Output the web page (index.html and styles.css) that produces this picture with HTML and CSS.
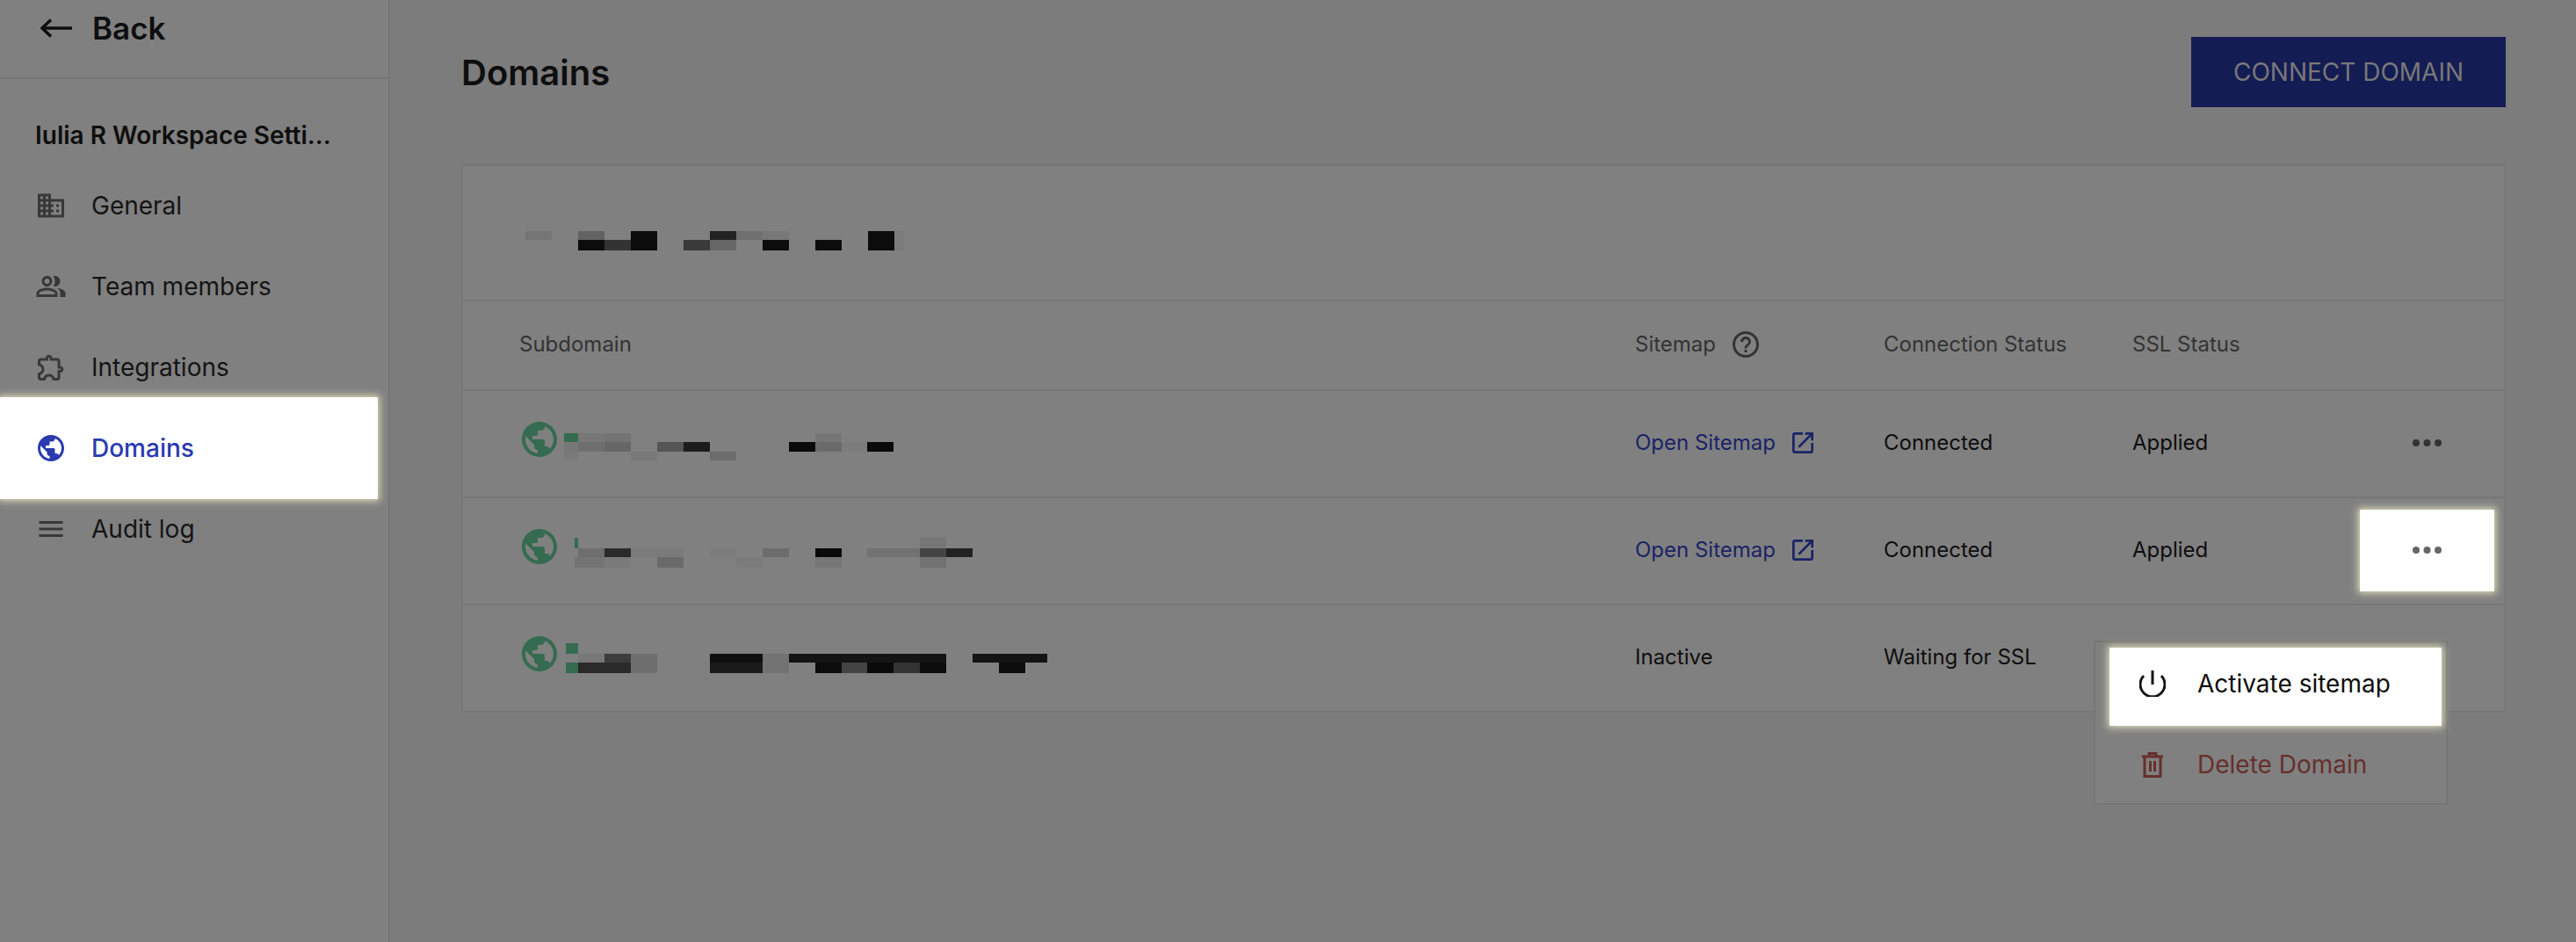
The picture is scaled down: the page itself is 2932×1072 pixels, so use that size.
FILE: index.html
```html
<!DOCTYPE html>
<html lang="en">
<head>
<meta charset="UTF-8" />
<title>Domains</title>
<link rel="stylesheet" href="styles.css">
</head>
<body>
<svg class="defs" width="0" height="0">
  <symbol id="globe" viewBox="2 2 20 20"><path d="M12 2C6.48 2 2 6.48 2 12s4.48 10 10 10 10-4.48 10-10S17.52 2 12 2zm-1 17.93c-3.95-.49-7-3.85-7-7.93 0-.62.08-1.21.21-1.79L9 15v1c0 1.1.9 2 2 2v1.93zm6.9-2.54c-.26-.81-1-1.39-1.9-1.39h-1v-3c0-.55-.45-1-1-1H8v-2h2c.55 0 1-.45 1-1V7h2c1.1 0 2-.9 2-2v-.41c2.93 1.19 5 4.06 5 7.41 0 2.08-.8 3.97-2.1 5.39z"/></symbol>
  <symbol id="open" viewBox="0 0 24 24"><path d="M19 19H5V5h7V3H5c-1.11 0-2 .9-2 2v14c0 1.1.89 2 2 2h14c1.1 0 2-.9 2-2v-7h-2v7zM14 3v2h3.59l-9.83 9.83 1.41 1.41L19 6.41V10h2V3h-7z"/></symbol>
  <symbol id="dots" viewBox="0 0 33 8"><circle cx="4" cy="4" r="4"/><circle cx="16.5" cy="4" r="4"/><circle cx="29" cy="4" r="4"/></symbol>
</svg>

<div class="page">
  <aside class="sidebar">
    <div class="back">
      <svg class="back-arrow" viewBox="0 0 36 22" width="36" height="22"><path d="M36 11H2M12 1.5 2 11l10 9.5"/></svg>
      <span>Back</span>
    </div>
    <div class="ws-title">Iulia R Workspace Setti...</div>
    <nav class="nav">
      <a class="nav-item">
        <svg class="icon" viewBox="0 0 24 24"><path d="M12 7V3H2v18h20V7H12zM6 19H4v-2h2v2zm0-4H4v-2h2v2zm0-4H4V9h2v2zm0-4H4V5h2v2zm4 12H8v-2h2v2zm0-4H8v-2h2v2zm0-4H8V9h2v2zm0-4H8V5h2v2zm10 12h-8v-2h2v-2h-2v-2h2v-2h-2V9h8v10zm-2-8h-2v2h2v-2zm0 4h-2v2h2v-2z"/></svg>
        General
      </a>
      <a class="nav-item">
        <svg class="icon" viewBox="0 0 24 24"><path d="M16.67 13.13C18.04 14.06 19 15.32 19 17v3h4v-3c0-2.18-3.57-3.47-6.33-3.87zM15 12c2.21 0 4-1.79 4-4s-1.79-4-4-4c-.47 0-.91.1-1.33.26C14.5 5.29 15 6.59 15 8s-.5 2.71-1.33 3.74c.42.16.86.26 1.33.26zM9 12c2.21 0 4-1.79 4-4s-1.79-4-4-4-4 1.79-4 4 1.79 4 4 4zm0-6c1.1 0 2 .9 2 2s-.9 2-2 2-2-.9-2-2 .9-2 2-2zM9 13c-2.67 0-8 1.34-8 4v3h16v-3c0-2.66-5.33-4-8-4zm6 5H3v-.99C3.2 16.29 6.3 15 9 15s5.8 1.29 6 2z"/></svg>
        Team members
      </a>
      <a class="nav-item">
        <svg class="icon" viewBox="0 0 24 24"><path d="M10.5 4.5c.28 0 .5.22.5.5v2h6v6h2c.28 0 .5.22.5.5s-.22.5-.5.5h-2v6h-2.12c-.68-1.75-2.39-3-4.38-3s-3.7 1.25-4.38 3H4v-2.12c1.75-.68 3-2.39 3-4.38 0-1.99-1.24-3.7-2.99-4.38L4 7h6V5c0-.28.22-.5.5-.5m0-2C9.12 2.5 8 3.62 8 5H4c-1.1 0-1.99.9-1.99 2v3.8h.29c1.49 0 2.7 1.21 2.7 2.7s-1.21 2.7-2.7 2.7H2V20c0 1.1.9 2 2 2h3.8v-.3c0-1.49 1.21-2.7 2.7-2.7s2.7 1.21 2.7 2.7v.3H17c1.1 0 2-.9 2-2v-4c1.38 0 2.5-1.12 2.5-2.5S20.38 11 19 11V7c0-1.1-.9-2-2-2h-4c0-1.38-1.12-2.5-2.5-2.5z"/></svg>
        Integrations
      </a>
      <a class="nav-item spot active">
        <svg class="icon" viewBox="0 0 24 24"><path d="M12 2C6.48 2 2 6.48 2 12s4.48 10 10 10 10-4.48 10-10S17.52 2 12 2zm-1 17.93c-3.95-.49-7-3.85-7-7.93 0-.62.08-1.21.21-1.79L9 15v1c0 1.1.9 2 2 2v1.93zm6.9-2.54c-.26-.81-1-1.39-1.9-1.39h-1v-3c0-.55-.45-1-1-1H8v-2h2c.55 0 1-.45 1-1V7h2c1.1 0 2-.9 2-2v-.41c2.93 1.19 5 4.06 5 7.41 0 2.08-.8 3.97-2.1 5.39z"/></svg>
        Domains
      </a>
      <a class="nav-item">
        <svg class="icon" viewBox="0 0 24 24"><path d="M3 18h18v-2H3v2zm0-5h18v-2H3v2zm0-7v2h18V6H3z"/></svg>
        Audit log
      </a>
    </nav>
  </aside>

  <main class="main">
    <div class="main-head">
      <h1 class="title">Domains</h1>
      <button class="connect">CONNECT DOMAIN</button>
    </div>

    <section class="card">
      <div class="card-top">
        <!-- blurred out domain name -->
        <svg class="mosaic" viewBox="594 189 600 152" width="600" height="152">
          <rect x="598" y="263" width="30" height="10" fill="#757575"/>
          <rect x="658" y="263" width="30" height="10" fill="#626262"/>
          <rect x="718" y="263" width="30" height="22" fill="#0c0c0c"/>
          <rect x="808" y="263" width="30" height="10" fill="#222"/>
          <rect x="838" y="263" width="30" height="10" fill="#707070"/>
          <rect x="868" y="263" width="30" height="10" fill="#787878"/>
          <rect x="988" y="263" width="30" height="22" fill="#0c0c0c"/>
          <rect x="658" y="273" width="30" height="12" fill="#0c0c0c"/>
          <rect x="688" y="273" width="30" height="12" fill="#333"/>
          <rect x="778" y="273" width="30" height="12" fill="#3a3a3a"/>
          <rect x="808" y="273" width="30" height="12" fill="#666"/>
          <rect x="868" y="273" width="30" height="12" fill="#0c0c0c"/>
          <rect x="928" y="273" width="30" height="12" fill="#0c0c0c"/>
          <rect x="1018" y="263" width="11" height="22" fill="#7b7b7b"/>
        </svg>
      </div>
      <table class="domains">
        <thead>
          <tr>
            <th class="col-sub">Subdomain</th>
            <th class="col-map"><span class="with-icon">Sitemap
              <svg class="help" viewBox="0 0 24 24"><path d="M11 18h2v-2h-2v2zm1-16C6.48 2 2 6.48 2 12s4.48 10 10 10 10-4.48 10-10S17.52 2 12 2zm0 18c-4.41 0-8-3.59-8-8s3.59-8 8-8 8 3.59 8 8-3.59 8-8 8zm0-14c-2.21 0-4 1.79-4 4h2c0-1.1.9-2 2-2s2 .9 2 2c0 2-3 1.75-3 5h2c0-2.25 3-2.5 3-5 0-2.21-1.79-4-4-4z"/></svg></span></th>
            <th class="col-conn">Connection Status</th>
            <th class="col-ssl">SSL Status</th>
            <th class="col-act"></th>
          </tr>
        </thead>
        <tbody>
          <tr>
            <td class="sub-cell">
              <svg class="mosaic" viewBox="594 445 600 120" width="600" height="120">
                <use href="#globe" x="594" y="480" width="40" height="40" class="globe"/>
                <rect x="642" y="493" width="16" height="10" fill="#356b50"/>
                <rect x="658" y="493" width="30" height="10" fill="#777"/>
                <rect x="688" y="493" width="30" height="10" fill="#747474"/>
                <rect x="928" y="493" width="30" height="10" fill="#767676"/>
                <rect x="642" y="503" width="16" height="11" fill="#787878"/>
                <rect x="658" y="503" width="30" height="11" fill="#6e6e6e"/>
                <rect x="688" y="503" width="30" height="11" fill="#666"/>
                <rect x="748" y="503" width="30" height="11" fill="#555"/>
                <rect x="778" y="503" width="30" height="11" fill="#1c1c1c"/>
                <rect x="898" y="503" width="30" height="11" fill="#0a0a0a"/>
                <rect x="928" y="503" width="30" height="11" fill="#6a6a6a"/>
                <rect x="958" y="503" width="29" height="11" fill="#7c7c7c"/>
                <rect x="987" y="503" width="30" height="11" fill="#0a0a0a"/>
                <rect x="642" y="514" width="16" height="10" fill="#7a7a7a"/>
                <rect x="718" y="514" width="30" height="10" fill="#787878"/>
                <rect x="808" y="514" width="30" height="10" fill="#6c6c6c"/>
              </svg>
            </td>
            <td><a class="link">Open Sitemap <svg class="open"><use href="#open"/></svg></a></td>
            <td>Connected</td>
            <td>Applied</td>
            <td class="act-cell"><button class="more"><svg class="dots"><use href="#dots"/></svg></button></td>
          </tr>
          <tr>
            <td class="sub-cell">
              <svg class="mosaic" viewBox="594 567 600 120" width="600" height="120">
                <use href="#globe" x="594" y="602" width="40" height="40" class="globe"/>
                <rect x="654" y="612" width="4" height="12" fill="#356b50"/>
                <rect x="1047" y="612" width="30" height="12" fill="#777"/>
                <rect x="658" y="624" width="30" height="10" fill="#6e6e6e"/>
                <rect x="688" y="624" width="30" height="10" fill="#2a2a2a"/>
                <rect x="718" y="624" width="60" height="10" fill="#7b7b7b"/>
                <rect x="808" y="624" width="30" height="10" fill="#7c7c7c"/>
                <rect x="868" y="624" width="30" height="10" fill="#6c6c6c"/>
                <rect x="928" y="624" width="30" height="10" fill="#0a0a0a"/>
                <rect x="987" y="624" width="60" height="10" fill="#727272"/>
                <rect x="1047" y="624" width="30" height="10" fill="#444"/>
                <rect x="1077" y="624" width="30" height="10" fill="#222"/>
                <rect x="654" y="634" width="34" height="12" fill="#747474"/>
                <rect x="688" y="634" width="30" height="12" fill="#7a7a7a"/>
                <rect x="748" y="634" width="30" height="12" fill="#6a6a6a"/>
                <rect x="838" y="634" width="30" height="12" fill="#7b7b7b"/>
                <rect x="928" y="634" width="30" height="12" fill="#767676"/>
                <rect x="1047" y="634" width="30" height="12" fill="#727272"/>
              </svg>
            </td>
            <td><a class="link">Open Sitemap <svg class="open"><use href="#open"/></svg></a></td>
            <td>Connected</td>
            <td>Applied</td>
            <td class="act-cell"><button class="more spot"><svg class="dots"><use href="#dots"/></svg></button></td>
          </tr>
          <tr>
            <td class="sub-cell">
              <svg class="mosaic" viewBox="594 689 600 120" width="600" height="120">
                <use href="#globe" x="594" y="724" width="40" height="40" class="globe"/>
                <rect x="644" y="732" width="14" height="12" fill="#356b50"/>
                <rect x="658" y="744" width="30" height="10" fill="#777"/>
                <rect x="688" y="744" width="30" height="10" fill="#3c3c3c"/>
                <rect x="718" y="744" width="30" height="22" fill="#6e6e6e"/>
                <rect x="808" y="744" width="60" height="10" fill="#0f0f0f"/>
                <rect x="868" y="744" width="30" height="22" fill="#727272"/>
                <rect x="898" y="744" width="179" height="10" fill="#141414"/>
                <rect x="1107" y="744" width="85" height="10" fill="#141414"/>
                <rect x="644" y="754" width="14" height="12" fill="#356b50"/>
                <rect x="658" y="754" width="60" height="12" fill="#2a2a2a"/>
                <rect x="808" y="754" width="60" height="12" fill="#1a1a1a"/>
                <rect x="928" y="754" width="30" height="12" fill="#0c0c0c"/>
                <rect x="958" y="754" width="29" height="12" fill="#444"/>
                <rect x="987" y="754" width="30" height="12" fill="#0a0a0a"/>
                <rect x="1017" y="754" width="30" height="12" fill="#333"/>
                <rect x="1047" y="754" width="30" height="12" fill="#0c0c0c"/>
                <rect x="1137" y="754" width="30" height="12" fill="#0c0c0c"/>
              </svg>
            </td>
            <td>Inactive</td>
            <td>Waiting for SSL</td>
            <td></td>
            <td></td>
          </tr>
        </tbody>
      </table>

      <div class="menu">
        <div class="menu-item spot">
          <svg class="menu-icon" viewBox="0 0 30 30"><path d="M15 0v16M5 6a14 14 0 1 0 20 0"/></svg>
          Activate sitemap
        </div>
        <div class="menu-item danger">
          <svg class="menu-icon" viewBox="0 0 30 30"><path d="M3 6h24M11 6V2.500h8V6M6 6v22.500h18V6M12.500 11v12M17.500 11v12"/></svg>
          Delete Domain
        </div>
      </div>
    </section>
  </main>
</div>
</body>
</html>
```

FILE: styles.css
```css
* {
  box-sizing: border-box;
}

html,
body {
  margin: 0;
  height: 100%;
  overflow: hidden;
}

body {
  background: #7c7c7c;
  color: #0e0e0e;
  font-family: "Inter", "Liberation Sans", sans-serif;
}

.defs {
  position: absolute;
}

.page {
  display: flex;
  height: 1072px;
}

/* spotlight items sit above the dimmed page */
.spot {
  background: #fff;
  box-shadow: 0 0 8px 2px #dcdcb8;
}

.sidebar {
  width: 444px;
  flex: none;
  background: #808080;
  border-right: 2px solid #767676;
}

.back {
  display: flex;
  align-items: center;
  gap: 23px;
  height: 90px;
  padding: 0 0 24px 46px;
  border-bottom: 2px solid #767676;
  font-size: 35px;
  font-weight: 600;
}

.back-arrow {
  fill: none;
  stroke: #0e0e0e;
  stroke-width: 3.4;
}

.ws-title {
  height: 40px;
  margin: 44px 0 14px;
  padding-left: 40px;
  font-size: 28px;
  line-height: 40px;
  font-weight: 600;
}

.nav-item {
  display: flex;
  align-items: center;
  gap: 28px;
  height: 92px;
  padding-left: 40px;
  font-size: 28px;
  color: #141414;
}

.icon {
  width: 36px;
  height: 36px;
  fill: #383838;
}

.nav-item.active {
  height: 116px;
  margin: -12px 12px -12px 0;
  color: #2a3bb0;
  font-weight: 500;
  position: relative;
}

.nav-item.active .icon {
  fill: #2a3bb0;
}

.main {
  flex: 1;
  padding: 42px 80px 0 81px;
}

.main-head {
  display: flex;
  align-items: center;
  justify-content: space-between;
  margin-bottom: 65px;
}

.title {
  margin: 0;
  font-size: 40px;
  font-weight: 600;
}

.connect {
  width: 358px;
  height: 80px;
  border: none;
  background: #141c54;
  color: #787878;
  font: 400 28px "Inter", sans-serif;
}

.card {
  position: relative;
  background: #808080;
  border: 2px solid #767676;
}

.card-top {
  height: 154px;
  border-bottom: 2px solid #767676;
  padding-left: 67px;
}

.mosaic {
  display: block;
}

.globe {
  fill: #356b50;
}

.domains {
  width: 100%;
  table-layout: fixed;
  border-collapse: separate;
  border-spacing: 0;
  font-size: 24px;
}

.domains th {
  height: 102px;
  padding: 0 0 3px;
  text-align: left;
  font-weight: 400;
  color: #333;
  border-bottom: 2px solid #767676;
}

.domains td {
  height: 122px;
  padding: 0 0 3px;
  border-bottom: 2px solid #767676;
}

.domains tbody tr:last-child td {
  border-bottom: none;
  height: 120px;
}

.domains .col-sub {
  width: 1334px;
  padding-left: 64px;
}

.col-map,
.col-conn {
  width: 283px;
}

.col-ssl {
  width: 244px;
}

.domains .sub-cell {
  padding: 0 0 0 67px;
}

.with-icon {
  display: inline-flex;
  align-items: center;
  gap: 16px;
}

.help {
  width: 36px;
  height: 36px;
  fill: #333;
}

.link {
  display: inline-flex;
  align-items: center;
  gap: 15px;
  color: #1a2366;
}

.open {
  width: 32px;
  height: 32px;
  fill: #1a2366;
}

.domains .act-cell {
  padding: 0 0 2px 3px;
  text-align: center;
}

.more {
  display: inline-flex;
  align-items: center;
  justify-content: center;
  width: 153px;
  height: 93px;
  padding: 0;
  border: none;
  background: transparent;
  vertical-align: middle;
}

.dots {
  width: 33px;
  height: 8px;
  fill: #333;
}

.more.spot {
  background: #fff;
}

.more.spot .dots {
  fill: #666;
}

.menu {
  position: absolute;
  top: 540px;
  right: 64px;
  width: 403px;
  height: 187px;
  padding: 6px 5px 0 16px;
  background: #808080;
  border: 2px solid #767676;
}

.menu-item {
  display: flex;
  align-items: center;
  gap: 36px;
  height: 89px;
  padding: 0 0 8px 34px;
  font-size: 28px;
  color: #0e0e0e;
}

.menu-item.danger {
  margin-top: 3px;
  color: #66302c;
}

.menu-icon {
  width: 30px;
  height: 30px;
  flex: none;
  fill: none;
  stroke: #141414;
  stroke-width: 3;
}

.danger .menu-icon {
  stroke: #66302c;
}
```
